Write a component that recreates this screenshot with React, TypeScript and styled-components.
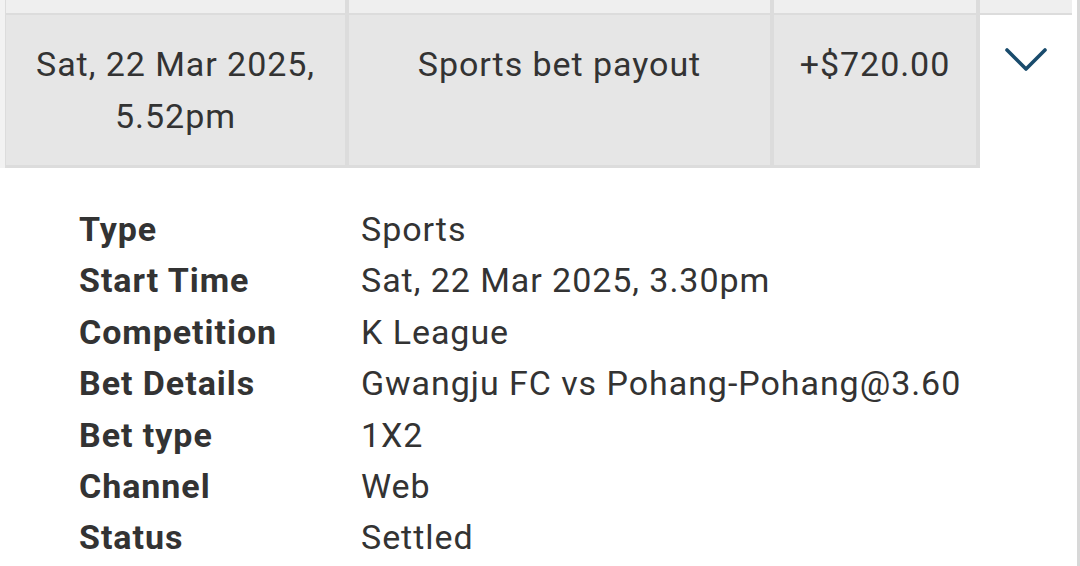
import React from "react";
import styled, { createGlobalStyle } from "styled-components";

const Global = createGlobalStyle`
  html, body { margin: 0; padding: 0; background: #ffffff; }
  body { font-family: Roboto, "Noto Sans", "Liberation Sans", sans-serif; color: #333333; }
`;

const Page = styled.div`
  width: 1080px;
  height: 566px;
  overflow: hidden;
  box-sizing: border-box;
  border-right: 3px solid #d8d8d8;
  background: #ffffff;
`;

const Table = styled.div`
  border-left: 5px solid #f2f2f2;
`;

const Row = styled.div`
  display: grid;
  grid-template-columns: 339px 421px 202px 92px;
  column-gap: 4px;
  width: max-content;
  background: #dcdcdc;
  padding-left: 1px;
`;

const PrevRow = styled(Row)`
  padding-bottom: 2px;
`;

const PrevCell = styled.div`
  height: 13px;
  background: #efefef;
`;

const Cell = styled.div<{ $center?: boolean }>`
  background: #e6e6e6;
  margin-bottom: 3px;
  padding: 23px 4px;
  font-size: 34px;
  line-height: 52px;
  letter-spacing: 0.95px;
  text-align: center;
  color: #333333;
  align-self: stretch;
  display: flex;
  flex-direction: column;
  justify-content: ${(p) => (p.$center ? "center" : "flex-start")};
`;

const ToggleCell = styled.div`
  background: #ffffff;
  display: flex;
  justify-content: center;
  padding-top: 31px;
`;

const Details = styled.div`
  display: grid;
  grid-template-columns: 282px auto;
  padding: 36px 0 0 79px;
  font-size: 34px;
  line-height: 51.4px;
  letter-spacing: 0.95px;
  color: #333333;
`;

const Label = styled.div`
  font-weight: 700;
  white-space: nowrap;
`;

const Value = styled.div`
  font-weight: 400;
  white-space: nowrap;
`;

const Chevron = () => (
  <svg width="46" height="28" viewBox="0 0 46 28" fill="none">
    <path
      d="M4 4 L23 23 L42 4"
      stroke="#194b6c"
      strokeWidth="3.6"
      strokeLinecap="round"
      strokeLinejoin="round"
    />
  </svg>
);

const rows: [string, string][] = [
  ["Type", "Sports"],
  ["Start Time", "Sat, 22 Mar 2025, 3.30pm"],
  ["Competition", "K League"],
  ["Bet Details", "Gwangju FC vs Pohang-Pohang@3.60"],
  ["Bet type", "1X2"],
  ["Channel", "Web"],
  ["Status", "Settled"],
];

export default function App() {
  return (
    <>
      <Global />
      <Page>
        <Table>
          <PrevRow>
            <PrevCell />
            <PrevCell />
            <PrevCell />
            <PrevCell />
          </PrevRow>
          <Row>
            <Cell $center>
              <span>Sat, 22 Mar 2025,</span>
              <span>5.52pm</span>
            </Cell>
            <Cell>Sports bet payout</Cell>
            <Cell>+$720.00</Cell>
            <ToggleCell>
              <Chevron />
            </ToggleCell>
          </Row>
        </Table>
        <Details>
          {rows.map(([k, v]) => (
            <React.Fragment key={k}>
              <Label>{k}</Label>
              <Value>{v}</Value>
            </React.Fragment>
          ))}
        </Details>
      </Page>
    </>
  );
}
